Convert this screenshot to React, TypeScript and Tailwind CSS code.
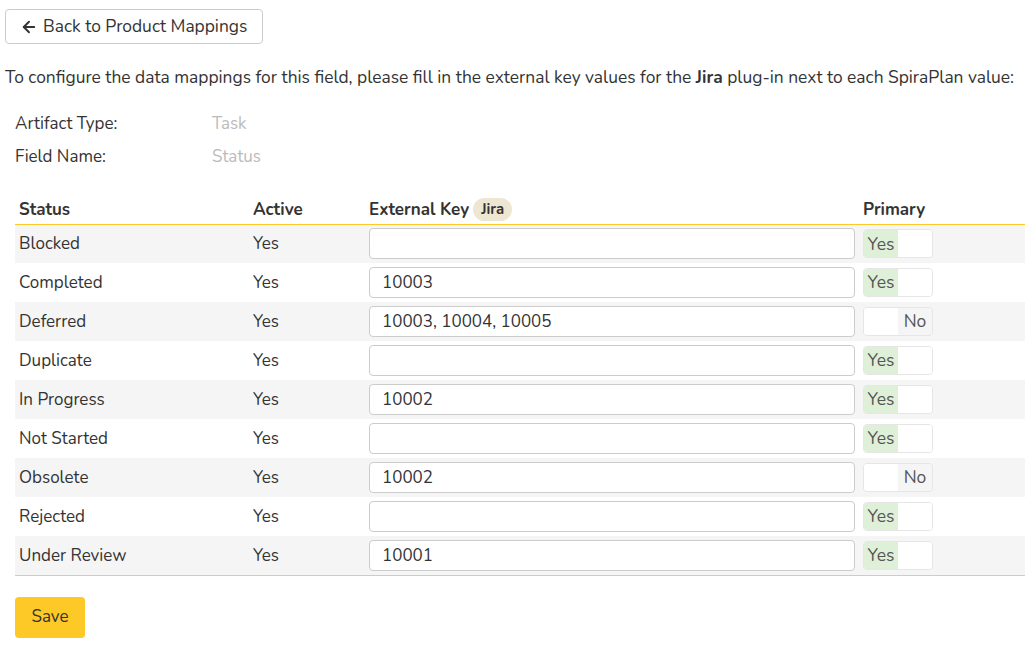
import { ArrowLeft } from "lucide-react"

const rows = [
  { name: "Blocked", key: "", primary: true },
  { name: "Completed", key: "10003", primary: true },
  { name: "Deferred", key: "10003, 10004, 10005", primary: false },
  { name: "Duplicate", key: "", primary: true },
  { name: "In Progress", key: "10002", primary: true },
  { name: "Not Started", key: "", primary: true },
  { name: "Obsolete", key: "10002", primary: false },
  { name: "Rejected", key: "", primary: true },
  { name: "Under Review", key: "10001", primary: true },
]

function Toggle({ on }: { on: boolean }) {
  return (
    <div className="flex h-[29px] w-[70px] overflow-hidden rounded border border-[#e6e6e6] text-[17.5px] text-[#555]">
      {on ? (
        <>
          <span className="flex w-[34px] items-center justify-center bg-[#dff0d8]">Yes</span>
          <span className="flex-1 bg-white" />
        </>
      ) : (
        <>
          <span className="w-[34px] bg-white" />
          <span className="flex flex-1 items-center justify-center bg-[#f5f5f5]">No</span>
        </>
      )}
    </div>
  )
}

export default function App() {
  return (
    <main
      className="min-h-screen w-full bg-white px-[5px] pt-[9px] text-[#333]"
      style={{ fontFamily: "Nunito, 'Noto Sans', sans-serif" }}
    >
      <button className="flex h-[35px] items-center gap-[5px] rounded border border-[#ccc] bg-white pl-[14px] pr-[15px] text-[17.4px] text-[#333]">
        <ArrowLeft className="h-[18px] w-[18px]" strokeWidth={2.5} />
        Back to Product Mappings
      </button>

      <p className="mt-[22px] whitespace-nowrap text-[17.4px] leading-[22px]">
        To configure the data mappings for this field, please fill in the external key values for the{" "}
        <b>Jira</b> plug-in next to each SpiraPlan value:
      </p>

      <div className="ml-[10px] mt-[25px] grid grid-cols-[197px_1fr] gap-y-[11px] text-[17px] leading-[22px]">
        <span>Artifact Type:</span>
        <span className="text-[#bbb]">Task</span>
        <span>Field Name:</span>
        <span className="text-[#bbb]">Status</span>
      </div>

      <table className="ml-[10px] mt-[27px] w-[1010px] border-collapse text-[17px]">
        <thead>
          <tr className="h-[29px] text-left font-bold">
            <th className="w-[238px] border-b border-[#fcc926] pl-1">Status</th>
            <th className="w-[116px] border-b border-[#fcc926]">Active</th>
            <th className="w-[494px] border-b border-[#fcc926]">
              <span className="flex items-center gap-1">
                External Key
                <span className="rounded-full bg-[#eee6d3] px-2 text-[15px] leading-[23px]">Jira</span>
              </span>
            </th>
            <th className="border-b border-[#fcc926]">Primary</th>
          </tr>
        </thead>
        <tbody>
          {rows.map((r, i) => (
            <tr key={r.name} className={i % 2 === 0 ? "h-[39px] bg-[#f5f5f5]" : "h-[39px] bg-white"}>
              <td className={i === rows.length - 1 ? "border-b border-[#ccc] pl-1" : "pl-1"}>{r.name}</td>
              <td className={i === rows.length - 1 ? "border-b border-[#ccc]" : ""}>Yes</td>
              <td className={i === rows.length - 1 ? "border-b border-[#ccc] pr-2" : "pr-2"}>
                <input
                  defaultValue={r.key}
                  className="h-[31px] w-[486px] rounded border border-[#ccc] bg-white px-3 text-[17px] text-[#333] outline-none"
                />
              </td>
              <td className={i === rows.length - 1 ? "border-b border-[#ccc]" : ""}>
                <Toggle on={r.primary} />
              </td>
            </tr>
          ))}
        </tbody>
      </table>

      <button className="ml-[10px] mt-[21px] h-[41px] w-[70px] rounded bg-[#fcc926] text-[17px] text-[#333]">
        Save
      </button>
    </main>
  )
}
